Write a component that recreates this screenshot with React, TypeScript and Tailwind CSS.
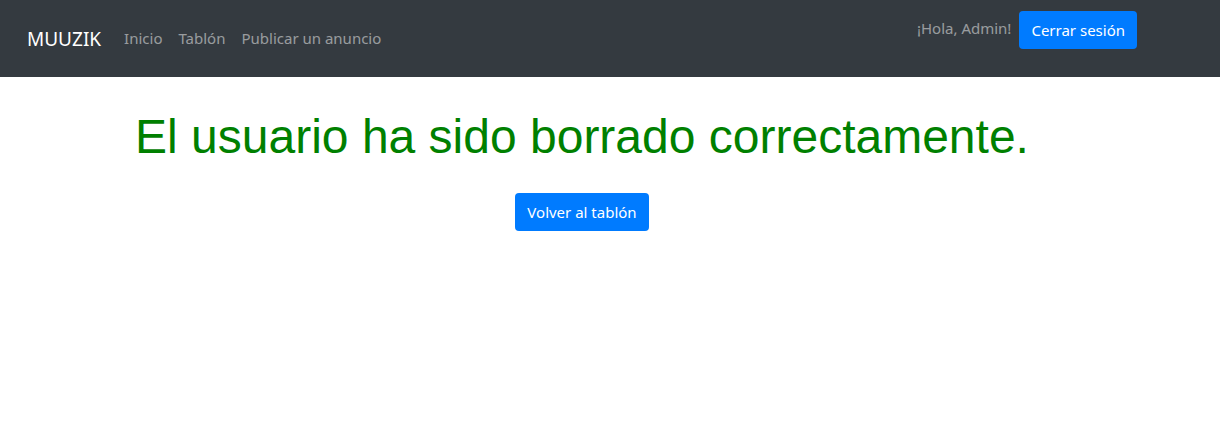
export default function App() {
  const ui = { fontFamily: '"Noto Sans", "Open Sans", sans-serif' };
  return (
    <div className="min-h-[446px] bg-white" style={ui}>
      <nav className="flex h-[77px] items-start justify-between bg-[#343a40] pl-[27px] pr-[83px]">
        <div className="flex h-full items-center">
          <a className="mr-[23px] text-[19px] leading-[30px] text-white">MUUZIK</a>
          <ul className="flex items-center text-[15px] text-[rgba(255,255,255,0.5)]">
            <li className="mr-4">Inicio</li>
            <li className="mr-4">Tablón</li>
            <li>Publicar un anuncio</li>
          </ul>
        </div>
        <div className="flex items-start pt-[11px]">
          <span className="mr-[8px] mt-[5px] text-[15px] leading-6 text-[rgba(255,255,255,0.5)]">
            ¡Hola, Admin!
          </span>
          <button className="h-[38px] rounded-[4px] bg-[#007bff] px-3 text-[15px] text-white">
            Cerrar sesión
          </button>
        </div>
      </nav>
      <main className="flex flex-col items-center pr-[56px]">
        <h1
          className="mt-[32px] text-[48px] leading-[56px] text-[#008000]"
          style={{ fontFamily: '"Liberation Sans", Arial, sans-serif' }}
        >
          El usuario ha sido borrado correctamente.
        </h1>
        <button className="mt-[28px] h-[38px] rounded-[4px] bg-[#007bff] px-3 text-[15px] text-white">
          Volver al tablón
        </button>
      </main>
    </div>
  );
}
